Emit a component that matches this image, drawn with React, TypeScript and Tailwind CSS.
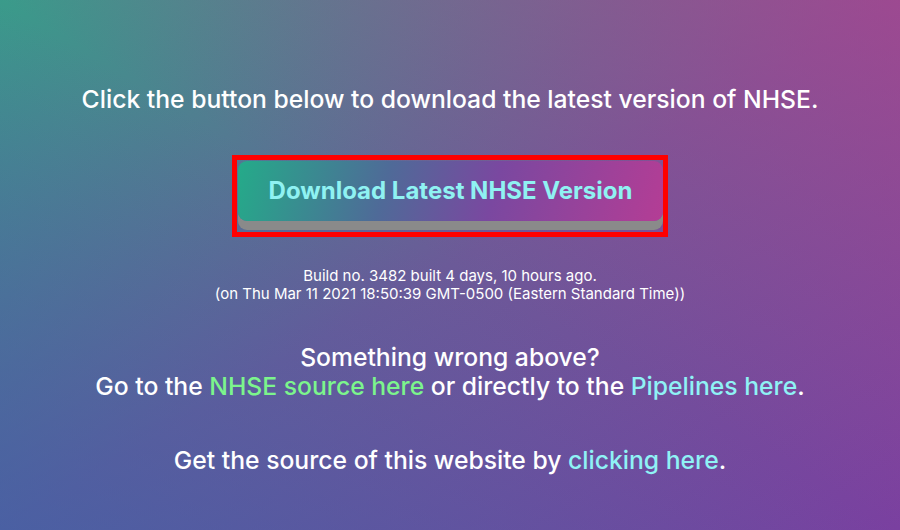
import React from "react";

export default function App() {
  return (
    <div className="h-[530px] w-full overflow-hidden bg-[linear-gradient(to_top_right,rgba(52,100,170,0.6),rgba(0,0,0,0)_50%,rgba(190,62,140,0.6)),linear-gradient(to_bottom_right,#3a9b8a,#6b5a98_50%,#7a40a0)] font-['Inter',sans-serif] font-medium text-white text-center flex flex-col items-center">
      <p className="mt-[85px] text-[24.7px] leading-[28px]">
        Click the button below to download the latest version of NHSE.
      </p>

      <div className="mt-[42px] border-[5px] border-[#ff0000] pt-px pl-px pb-[11px]">
        <button className="w-[425px] h-[60px] rounded-[9px] bg-[linear-gradient(105deg,#24ab89_0%,#4f6a98_35%,#7a48a0_60%,#b43d95_100%)] shadow-[0_9px_0_#8a8a8a] text-[24px] font-bold text-[#8ff2f2] cursor-pointer">
          Download Latest NHSE Version
        </button>
      </div>

      <div className="mt-[30px] text-[15px] leading-[18px] font-normal">
        <p>Build no. 3482 built 4 days, 10 hours ago.</p>
        <p>(on Thu Mar 11 2021 18:50:39 GMT-0500 (Eastern Standard Time))</p>
      </div>

      <div className="mt-[40px] text-[24.7px] leading-[29px]">
        <p>Something wrong above?</p>
        <p>
          Go to the <a href="#" className="text-[#7cf58c]">NHSE source here</a> or directly to the{" "}
          <a href="#" className="text-[#8ff2f5]">Pipelines here</a>.
        </p>
      </div>

      <p className="mt-[45px] text-[24.7px] leading-[29px]">
        Get the source of this website by <a href="#" className="text-[#8ff2f5]">clicking here</a>.
      </p>
    </div>
  );
}
